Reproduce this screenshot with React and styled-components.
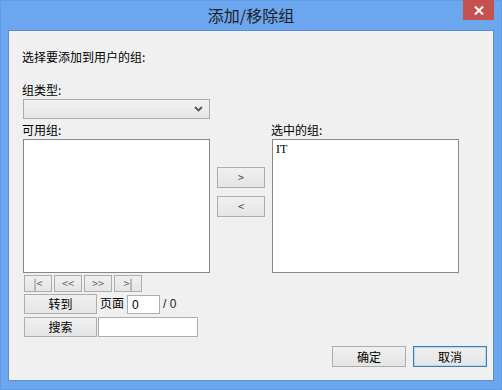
import React from 'react'
import styled, { createGlobalStyle } from 'styled-components'

const GlobalStyle = createGlobalStyle`
  html, body {
    margin: 0;
    padding: 0;
    background: #ffffff;
  }
  body {
    font-family: "Noto Sans CJK SC", "Liberation Sans", sans-serif;
    font-size: 12px;
    color: #000;
  }
`

const Window = styled.div`
  width: 502px;
  height: 390px;
  box-sizing: border-box;
  background: #6ba6ef;
  border: 1px solid #5f9be6;
  display: flex;
  flex-direction: column;
`

const TitleBar = styled.div`
  height: 29px;
  display: grid;
  grid-template-columns: 1fr auto 1fr;
  align-items: start;
`

const Title = styled.div`
  grid-column: 2;
  padding-top: 4px;
  font-size: 16px;
  line-height: 20px;
  color: #1e1e1e;
`

const CloseButton = styled.div`
  grid-column: 3;
  justify-self: end;
  margin-top: -1px;
  margin-right: 7px;
  width: 31px;
  height: 20px;
  background: #c75050;
  display: flex;
  align-items: center;
  justify-content: center;
`

const Client = styled.div`
  margin: 0 7px 8px 7px;
  flex: 1;
  background: #f0f0f0;
  border: 1px solid #5a8fd3;
  display: flex;
  flex-direction: column;
  padding: 18px 6px 0 13px;
  box-sizing: border-box;
`

const Label = styled.div`
  line-height: 16px;
  height: 16px;
  margin-top: ${p => p.$mt || 0}px;
  white-space: nowrap;
`

const Select = styled.div`
  margin: 1px 0 0 1px;
  width: 187px;
  height: 20px;
  box-sizing: border-box;
  border: 1px solid #acacac;
  background: linear-gradient(#f2f2f2, #e6e6e6);
  display: flex;
  align-items: center;
  justify-content: flex-end;
  padding-right: 6px;
`

const Transfer = styled.div`
  display: flex;
  margin-top: 3px;
  gap: 6px;
`

const Column = styled.div`
  width: 188px;
  display: flex;
  flex-direction: column;
`

const ListBox = styled.div`
  margin: 1px 0 0 1px;
  width: 187px;
  height: 134px;
  box-sizing: border-box;
  background: #ffffff;
  border: 1px solid #828790;
  padding: 2px 3px;
  font-family: "Liberation Serif", "DejaVu Serif", serif;
  font-size: 12px;
  line-height: 14px;
`

const Middle = styled.div`
  width: 48px;
  padding-top: 45px;
  display: flex;
  flex-direction: column;
  gap: 8px;
  margin-left: 1px;
`

const Button = styled.div`
  width: ${p => p.$w}px;
  height: ${p => p.$h}px;
  box-sizing: border-box;
  border: 1px solid ${p => (p.$focus ? '#3c7fb1' : '#adadad')};
  background: linear-gradient(#f0f0f0, #e5e5e5);
  display: flex;
  align-items: center;
  justify-content: center;
  font-size: ${p => p.$fs || 12}px;
  color: ${p => p.$color || '#000'};
  line-height: 1;
  flex-shrink: 0;
  box-shadow: ${p => (p.$focus ? 'inset 0 0 0 1px #b5d7f3' : 'none')};
`

const NavRow = styled.div`
  display: flex;
  gap: 2px;
  margin: 2px 0 0 2px;
`

const FormRow = styled.div`
  display: flex;
  align-items: center;
  margin: ${p => p.$mt}px 0 0 2px;
`

const PageLabel = styled.span`
  margin: -2px 3px 0 3px;
  line-height: 16px;
`

const TextInput = styled.div`
  width: ${p => p.$w}px;
  height: ${p => p.$h}px;
  box-sizing: border-box;
  background: #ffffff;
  border: 1px solid #abadb3;
  font-family: "Liberation Sans", sans-serif;
  font-size: 12px;
  padding: 2px 0 0 4px;
  margin-left: ${p => p.$ml || 0}px;
`

const Total = styled.span`
  font-family: "Liberation Sans", sans-serif;
  font-size: 12px;
  margin-left: 3px;
  color: #222;
`

const Footer = styled.div`
  margin-top: auto;
  margin-bottom: 13px;
  display: flex;
  justify-content: flex-end;
  gap: 7px;
`

const Chevron = () => (
  <svg width="9" height="6" viewBox="0 0 9 6">
    <path d="M1 1 L4.5 4.5 L8 1" fill="none" stroke="#555" strokeWidth="1.8" />
  </svg>
)

const CloseIcon = () => (
  <svg width="10" height="9" viewBox="0 0 10 9">
    <path d="M1 0.5 L9 8.5 M9 0.5 L1 8.5" stroke="#fff" strokeWidth="2" />
  </svg>
)

export default function App() {
  return (
    <React.Fragment>
      <GlobalStyle />
      <Window>
        <TitleBar>
          <Title>添加/移除组</Title>
          <CloseButton>
            <CloseIcon />
          </CloseButton>
        </TitleBar>
        <Client>
          <Label>选择要添加到用户的组:</Label>
          <Label $mt={17}>组类型:</Label>
          <Select>
            <Chevron />
          </Select>
          <Transfer>
            <Column>
              <Label>可用组:</Label>
              <ListBox />
            </Column>
            <Middle>
              <Button $w={48} $h={21} $color="#444" $fs={11}>&gt;</Button>
              <Button $w={48} $h={21} $color="#444" $fs={11}>&lt;</Button>
            </Middle>
            <Column>
              <Label>选中的组:</Label>
              <ListBox>IT</ListBox>
            </Column>
          </Transfer>
          <NavRow>
            <Button $w={28} $h={17} $fs={11} $color="#666">|&lt;</Button>
            <Button $w={28} $h={17} $fs={11} $color="#666">&lt;&lt;</Button>
            <Button $w={28} $h={17} $fs={11} $color="#666">&gt;&gt;</Button>
            <Button $w={28} $h={17} $fs={11} $color="#666">&gt;|</Button>
          </NavRow>
          <FormRow $mt={2}>
            <Button $w={73} $h={20}>转到</Button>
            <PageLabel>页面</PageLabel>
            <TextInput $w={33} $h={19}>0</TextInput>
            <Total>/ 0</Total>
          </FormRow>
          <FormRow $mt={3}>
            <Button $w={73} $h={20}>搜索</Button>
            <TextInput $w={100} $h={20} $ml={1} />
          </FormRow>
          <Footer>
            <Button $w={74} $h={21}>确定</Button>
            <Button $w={74} $h={21} $focus>取消</Button>
          </Footer>
        </Client>
      </Window>
    </React.Fragment>
  )
}
